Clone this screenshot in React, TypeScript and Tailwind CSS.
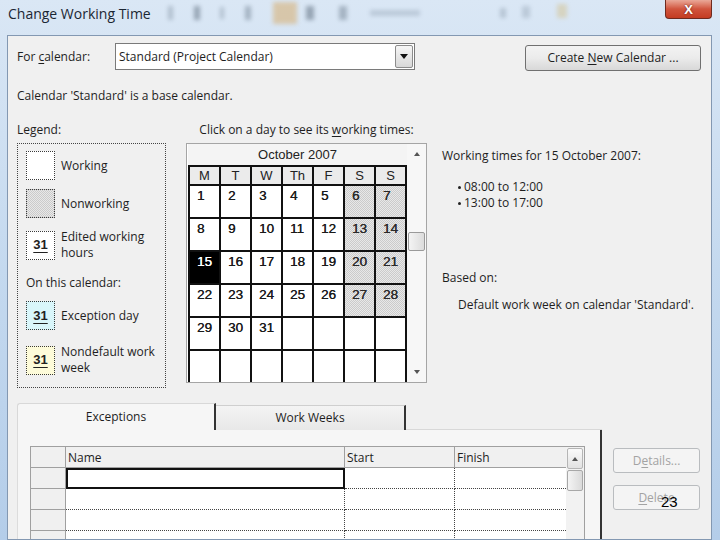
import React from "react";

const ui = "font-['Open_Sans','Noto_Sans',sans-serif]";
const arial = "font-['Liberation_Sans',Arial,sans-serif]";
const hatch =
  "bg-[#dadada] bg-[image:repeating-conic-gradient(#cbcbcb_0_25%,#e8e8e8_0_50%)] bg-[length:2px_2px]";

const weeks: (number | null)[][] = [
  [1, 2, 3, 4, 5, 6, 7],
  [8, 9, 10, 11, 12, 13, 14],
  [15, 16, 17, 18, 19, 20, 21],
  [22, 23, 24, 25, 26, 27, 28],
  [29, 30, 31, null, null, null, null],
  [null, null, null, null, null, null, null],
];

const dayNames = ["M", "T", "W", "Th", "F", "S", "S"];

function U({ children }: { children: React.ReactNode }) {
  return <span className="underline underline-offset-2">{children}</span>;
}

function TitleBar() {
  return (
    <div className="h-[35px] shrink-0 flex items-start">
      <div className="w-[168px] pl-[8px] pt-[4px] text-[14px] leading-[20px] text-[#1b2633]">
        Change Working Time
      </div>
      {/* blurred toolbar seen through the glass */}
      <span className="mt-[6px] w-[5px] h-[14px] bg-[#556677] opacity-30 blur-[2px]" />
      <span className="ml-[21px] mt-[6px] w-[6px] h-[14px] bg-[#334455] opacity-40 blur-[2px]" />
      <span className="ml-[20px] mt-[7px] w-[4px] h-[12px] bg-[#556677] opacity-30 blur-[2px]" />
      <span className="ml-[21px] mt-[6px] w-[6px] h-[14px] bg-[#445566] opacity-35 blur-[2px]" />
      <span className="ml-[22px] mt-[2px] w-[24px] h-[22px] bg-[#d7a862] opacity-50 blur-[2px]" />
      <span className="ml-[9px] mt-[6px] w-[8px] h-[14px] bg-[#334455] opacity-40 blur-[2px]" />
      <span className="ml-[25px] mt-[6px] w-[8px] h-[14px] bg-[#445566] opacity-35 blur-[2px]" />
      <span className="ml-[23px] mt-[10px] w-[50px] h-[6px] bg-[#778899] opacity-30 blur-[2px]" />
      <span className="ml-[80px] mt-[8px] w-[6px] h-[10px] bg-[#667788] opacity-30 blur-[2px]" />
      <span className="ml-[16px] mt-[6px] w-[8px] h-[12px] bg-[#778899] opacity-30 blur-[2px]" />
      <span className="ml-[27px] mt-[4px] w-[10px] h-[14px] bg-[#d0b060] opacity-35 blur-[2px]" />
      <div className="ml-auto mr-[8px] w-[47px] h-[19px] rounded-b-[4px] border border-t-0 border-[#6e2a1f] bg-gradient-to-b from-[#e9a898] via-[#d0543d] to-[#c43c22] flex items-center justify-center">
        <span className={`${arial} text-[13px] font-bold text-white leading-none [text-shadow:0_0_2px_#5a1a10]`}>
          X
        </span>
      </div>
    </div>
  );
}

function Swatch({ kind }: { kind: "working" | "nonworking" | "edited" | "exception" | "nondefault" }) {
  const bg =
    kind === "nonworking"
      ? hatch
      : kind === "exception"
      ? "bg-[#d9f6fa]"
      : kind === "nondefault"
      ? "bg-[#fdfbd9]"
      : "bg-white";
  const num = kind === "edited" || kind === "exception" || kind === "nondefault";
  return (
    <div
      className={`w-[29px] h-[29px] shrink-0 border border-dotted border-[#3a3a3a] flex items-center justify-center ${bg}`}
    >
      {num && (
        <span className={`${arial} text-[13px] font-bold underline underline-offset-[3px] text-[#222]`}>31</span>
      )}
    </div>
  );
}

function Legend() {
  return (
    <div className="w-[149px] shrink-0">
      <div className="leading-[16px]">Legend:</div>
      <div className="mt-[5px] h-[245px] border border-dotted border-[#444] pl-[8px] pt-[7px] flex flex-col">
        <div className="flex items-center">
          <Swatch kind="working" />
          <span className="ml-[6px]">Working</span>
        </div>
        <div className="mt-[9px] flex items-center">
          <Swatch kind="nonworking" />
          <span className="ml-[6px]">Nonworking</span>
        </div>
        <div className="mt-[11px] flex items-center">
          <Swatch kind="edited" />
          <span className="ml-[6px] leading-[16px]">
            Edited working
            <br />
            hours
          </span>
        </div>
        <div className="mt-[14px] leading-[16px]">On this calendar:</div>
        <div className="mt-[10px] flex items-center">
          <Swatch kind="exception" />
          <span className="ml-[6px]">Exception day</span>
        </div>
        <div className="mt-[14px] flex items-center">
          <Swatch kind="nondefault" />
          <span className="ml-[6px] leading-[16px]">
            Nondefault work
            <br />
            week
          </span>
        </div>
      </div>
    </div>
  );
}

function MonthView() {
  return (
    <div className="ml-[20px] w-[241px] shrink-0">
      <div className="leading-[16px] text-center">
        Click on a day to see its <U>w</U>orking times:
      </div>
      <div className="mt-[5px] h-[240px] border border-[#a5a5a5] bg-white flex overflow-hidden">
        <div className="pl-[1px] flex flex-col">
          <div className={`${arial} h-[21px] w-[219px] bg-[#f4f4f4] text-[13px] text-[#222] flex items-center justify-center`}>
            October 2007
          </div>
          <div className="grid grid-cols-[repeat(7,29px)] grid-rows-[17px_repeat(6,31px)] gap-[2px] bg-[#111] px-[2px] pt-[2px]">
            {dayNames.map((d, i) => (
              <div
                key={"h" + i}
                className={`${arial} bg-[#ebebeb] text-[13px] leading-[17px] text-[#222] text-center`}
              >
                {d}
              </div>
            ))}
            {weeks.flatMap((w, r) =>
              w.map((d, c) => {
                const sel = d === 15;
                const off = d !== null && c >= 5;
                const bg = sel ? "bg-black text-white" : off ? `${hatch} text-[#2a2a2a]` : "bg-white text-[#1a1a1a]";
                return (
                  <div
                    key={r + "-" + c}
                    className={`${arial} ${bg} text-[13.5px] leading-[15px] pl-[7px] pt-[2px] [text-shadow:0.25px_0_0_currentColor]`}
                  >
                    {d ?? ""}
                  </div>
                );
              })
            )}
          </div>
        </div>
        <div className="flex-1 flex flex-col bg-[#f7f7f7]">
          <div className="h-[20px] flex items-center justify-center">
            <span className="w-0 h-0 border-l-[3px] border-r-[3px] border-b-[4px] border-l-transparent border-r-transparent border-b-[#555]" />
          </div>
          <div className="flex-1">
            <div className="mt-[68px] mx-[1px] h-[19px] rounded-[2px] border border-[#9a9a9a] bg-gradient-to-r from-[#f4f4f4] to-[#dcdcdc]" />
          </div>
          <div className="h-[20px] flex items-center justify-center">
            <span className="w-0 h-0 border-l-[3px] border-r-[3px] border-t-[4px] border-l-transparent border-r-transparent border-t-[#555]" />
          </div>
        </div>
      </div>
    </div>
  );
}

function TimesInfo() {
  return (
    <div className="ml-[15px] flex-1 leading-[16px]">
      <div className="mt-[26px]">Working times for 15 October 2007:</div>
      <div className="mt-[15px] pl-[16px]">
        <div className="flex items-center">
          <span className="w-[3px] h-[3px] rounded-full bg-[#222] mr-[3px]" />
          <span>08:00 to 12:00</span>
        </div>
        <div className="flex items-center">
          <span className="w-[3px] h-[3px] rounded-full bg-[#222] mr-[3px]" />
          <span>13:00 to 17:00</span>
        </div>
      </div>
      <div className="mt-[59px]">Based on:</div>
      <div className="mt-[11px] pl-[16px]">Default work week on calendar 'Standard'.</div>
    </div>
  );
}

function ExceptionsTable() {
  const rows = [0, 1, 2, 3];
  return (
    <div className="w-[555px] border border-[#a0a0a0] flex bg-white">
      <div className="grid grid-cols-[35px_279px_110px_111px] auto-rows-[21px]">
        <div className="bg-[#f0f0f0] border-r border-b border-[#a0a0a0]" />
        <div className="bg-[#f0f0f0] border-r border-b border-[#a0a0a0] pl-[2px] pt-[2px] leading-[18px]">Name</div>
        <div className="bg-[#f0f0f0] border-r border-b border-[#a0a0a0] pl-[2px] pt-[2px] leading-[18px]">Start</div>
        <div className="bg-[#f0f0f0] border-b border-[#a0a0a0] pl-[2px] pt-[2px] leading-[18px]">Finish</div>
        {rows.map((r) => (
          <React.Fragment key={r}>
            <div className="bg-[#f0f0f0] border-r border-b border-[#a0a0a0]" />
            {r === 0 ? (
              <div className="border-2 border-[#111]" />
            ) : (
              <div className="border-r border-b border-dotted border-[#444]" />
            )}
            <div className="border-r border-b border-dotted border-[#444]" />
            <div className="border-b border-dotted border-[#444]" />
          </React.Fragment>
        ))}
      </div>
      <div className="w-[18px] bg-[#f2f2f2] flex flex-col">
        <div className="h-[21px] mx-[1px] mt-[1px] rounded-[2px] border border-[#b5b5b5] bg-gradient-to-b from-[#fafafa] to-[#e2e2e2] flex items-center justify-center">
          <span className="w-0 h-0 border-l-[3px] border-r-[3px] border-b-[4px] border-l-transparent border-r-transparent border-b-[#555]" />
        </div>
        <div className="h-[21px] mx-[1px] mt-[1px] rounded-[2px] border border-[#a8a8a8] bg-gradient-to-r from-[#f4f4f4] to-[#dadada]" />
      </div>
    </div>
  );
}

function BottomArea() {
  return (
    <div className="mt-[15px] flex items-start flex-1 min-h-0">
      <div className="w-[585px] shrink-0 flex flex-col h-full">
        <div className="h-[27px] flex items-end">
          <div className="w-[199px] h-[27px] rounded-tl-[3px] border-t border-l border-[#d8d8d8] border-r-2 border-r-[#333] bg-[#f6f6f6] flex items-center justify-center">
            Exceptions
          </div>
          <div className="w-[190px] h-[25px] border-t border-[#cfcfcf] border-r-2 border-r-[#333] bg-gradient-to-b from-[#f4f4f4] to-[#e8e8e8] flex items-center justify-center">
            Work Weeks
          </div>
          <div className="flex-1 h-[1px] bg-[#d8d8d8]" />
        </div>
        <div className="flex-1 border-l border-[#dcdcdc] border-r-2 border-r-[#333] bg-[#f6f6f6] pl-[12px] pt-[16px]">
          <ExceptionsTable />
        </div>
      </div>
      <div className="ml-[11px] w-[87px] pt-[45px] flex flex-col">
        <div className="h-[25px] rounded-[3px] border border-[#b9bcbf] bg-[#f4f4f4] text-[#a3a3a3] flex items-center justify-center">
          <span>
            D<U>e</U>tails...
          </span>
        </div>
        <div className="relative mt-[12px] h-[25px] rounded-[3px] border border-[#b9bcbf] bg-[#f4f4f4] text-[#a3a3a3] flex items-center justify-center">
          <span>
            <U>D</U>elete
          </span>
          <span className={`${arial} absolute left-[47px] top-[8px] text-[15px] leading-[15px] text-black`}>23</span>
        </div>
      </div>
    </div>
  );
}

export default function App() {
  return (
    <div
      className={`${ui} w-[720px] h-[540px] overflow-hidden flex flex-col bg-gradient-to-b from-[#dae7f5] via-[#c4d9ef] to-[#b4cde9] text-[12px] text-[#1e1e1e]`}
    >
      <TitleBar />
      <div className="flex-1 min-h-0 ml-[7px] mr-[8px] border border-[#8398b2] bg-[#f0f0f0] pl-[9px] pr-[10px] pt-[7px] flex flex-col overflow-hidden">
        <div className="h-[27px] flex items-center">
          <div className="w-[98px] shrink-0">
            For <U>c</U>alendar:
          </div>
          <div className="w-[300px] h-[27px] border border-[#7a7a7a] bg-white flex items-center">
            <span className="pl-[3px] flex-1">Standard (Project Calendar)</span>
            <div className="w-[18px] h-[23px] mr-[1px] rounded-[2px] border border-[#8c8c8c] bg-gradient-to-b from-[#f6f6f6] to-[#d8d8d8] flex items-center justify-center">
              <span className="w-0 h-0 border-l-[4px] border-r-[4px] border-t-[5px] border-l-transparent border-r-transparent border-t-[#111]" />
            </div>
          </div>
          <div className="ml-auto self-start mt-[2px] w-[176px] h-[26px] rounded-[3px] border border-[#707070] bg-gradient-to-b from-[#f3f3f3] via-[#ebebeb] to-[#d8d8d8] flex items-center justify-center">
            <span>
              Create <U>N</U>ew Calendar ...
            </span>
          </div>
        </div>
        <div className="mt-[18px] leading-[16px]">Calendar 'Standard' is a base calendar.</div>
        <div className="mt-[18px] flex shrink-0">
          <Legend />
          <MonthView />
          <TimesInfo />
        </div>
        <BottomArea />
      </div>
    </div>
  );
}
